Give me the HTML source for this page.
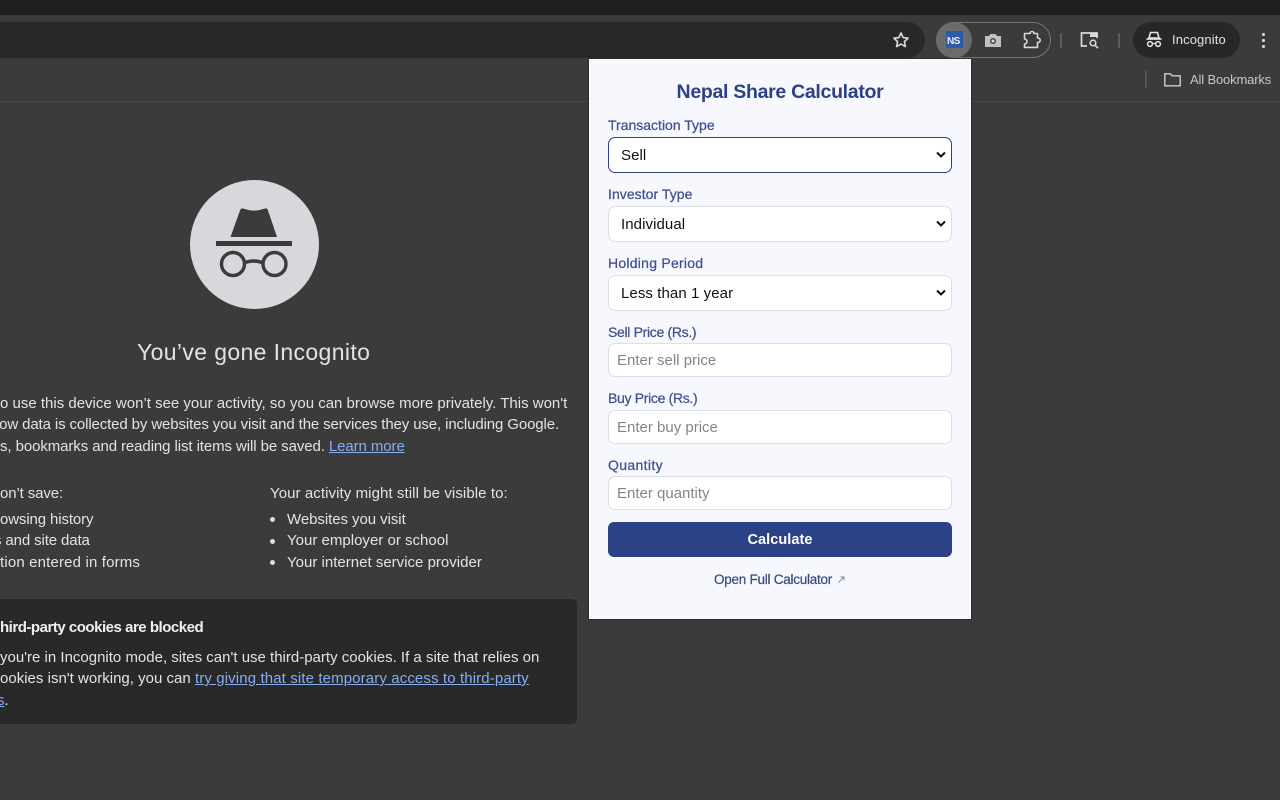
<!DOCTYPE html>
<html><head><meta charset="utf-8"><style>
html,body{margin:0;padding:0;width:1280px;height:800px;overflow:hidden;background:#3b3b3b;font-family:"Liberation Sans",sans-serif}
.a{position:absolute;white-space:nowrap}
.t{font-size:15px;line-height:20px;color:#e3e3e3;letter-spacing:-.12px}
a{color:#86aef0;text-decoration:underline}
.l{left:608px;font-size:14px;line-height:16px;color:#42508f;font-weight:400;-webkit-text-stroke:.25px #42508f}
.f{left:608px;width:344px;box-sizing:border-box;background:#fff;border:1px solid #dcdfea;border-radius:7px;font-family:"Liberation Sans",sans-serif;font-size:15px;color:#111;margin:0}
.s{height:36px;padding-left:12px;line-height:36px;letter-spacing:.08px}
.i{height:34px;padding-left:8px;line-height:34px;color:#858585}
.c{position:absolute;right:5px;top:13px}
</style></head><body>
<div class="a" style="left:0;top:0;width:1280px;height:15px;background:#1f1f1f"></div>
<div class="a" style="left:-30px;top:22px;width:955px;height:36px;background:#282828;border-radius:18px"></div>
<div class="a" style="left:0;top:101px;width:1280px;height:1px;background:#474747"></div>

<svg class="a" style="left:891px;top:30px" width="20" height="20" viewBox="0 0 20 20"><path d="M10 3l2.100 4.600 5 .6-3.700 3.400 1 5-4.400-2.500-4.400 2.500 1-5L2.900 8.200l5-.6z" fill="none" stroke="#dcdcdc" stroke-width="1.600" stroke-linejoin="round"/></svg>

<div class="a" style="left:936px;top:22px;width:113px;height:34px;border:1px solid #747474;border-radius:18px"></div>
<div class="a" style="left:936px;top:22px;width:36px;height:36px;background:#6b6b6b;border-radius:50%"></div>
<div class="a" style="left:946px;top:31px;width:17px;height:17px;background:#2a5caa"></div>
<div class="a" style="left:947px;top:36px;font-size:10px;line-height:11px;font-weight:700;color:#e8eef8;letter-spacing:-.6px">NS</div>
<svg class="a" style="left:984px;top:31px" width="18" height="18" viewBox="0 0 18 18"><path d="M1 5h4l1.500-2h5L13 5h4v11H1z" fill="#c0c0c0"/><circle cx="9" cy="10" r="3" fill="#444"/><circle cx="9" cy="10" r="1.500" fill="#ddd"/></svg>
<svg class="a" style="left:1022px;top:30px" width="20" height="20" viewBox="0 0 20 20"><path d="M2.500 3.500h5.500a2 2 0 0 1 4 0h3.500v4.500h.5a2.200 2.200 0 0 1 0 4.400h-.5v5H2.500v-3.400a2.500 2.500 0 0 0 0-5z" fill="none" stroke="#d8d8d8" stroke-width="1.600" stroke-linejoin="round"/></svg>
<div class="a" style="left:1060px;top:33px;width:2px;height:15px;background:#5c5c5c"></div>
<svg class="a" style="left:1079px;top:30px" width="22" height="20" viewBox="0 0 22 20"><path d="M8 16H2.500V3H18v5" fill="none" stroke="#d8d8d8" stroke-width="1.700"/><rect x="11" y="3" width="8" height="4" fill="#d8d8d8"/><circle cx="14" cy="13" r="2.800" fill="none" stroke="#d8d8d8" stroke-width="1.600"/><path d="M16 15.200l3 3" stroke="#d8d8d8" stroke-width="1.700"/></svg>
<div class="a" style="left:1118px;top:33px;width:2px;height:15px;background:#5c5c5c"></div>
<div class="a" style="left:1133px;top:22px;width:107px;height:36px;background:#272727;border-radius:18px"></div>
<svg class="a" style="left:1145px;top:30px" width="18" height="18" viewBox="0 0 18 18"><path d="M5.500 2.500h7L14 8H4z" fill="none" stroke="#e3e3e3" stroke-width="1.600"/><path d="M1.500 9h15" stroke="#e3e3e3" stroke-width="1.700"/><circle cx="5" cy="14" r="2.400" fill="none" stroke="#e3e3e3" stroke-width="1.500"/><circle cx="13" cy="14" r="2.400" fill="none" stroke="#e3e3e3" stroke-width="1.500"/><path d="M7.400 13.500h3.200" stroke="#e3e3e3" stroke-width="1.200"/></svg>
<div class="a" style="left:1172px;top:32px;font-size:13px;line-height:16px;color:#e3e3e3;letter-spacing:.12px">Incognito</div>
<div class="a" style="left:1262px;top:33px;width:3px;height:3px;border-radius:50%;background:#ddd;box-shadow:0 6px 0 #ddd,0 12px 0 #ddd"></div>

<div class="a" style="left:1145px;top:71px;width:2px;height:17px;background:#555"></div>
<svg class="a" style="left:1163px;top:71px" width="19" height="17" viewBox="0 0 19 17"><path d="M1.800 14.800V2.800h5.400l2 2h8v10z" fill="none" stroke="#cfcfcf" stroke-width="1.400"/></svg>
<div class="a" style="left:1190px;top:72px;font-size:13px;line-height:16px;color:#c7c7c7;letter-spacing:-.15px">All Bookmarks</div>

<div class="a" style="left:190px;top:180px;width:129px;height:129px;background:#d7d8dc;border-radius:50%"></div>
<svg class="a" style="left:190px;top:180px" width="129" height="129" viewBox="0 0 129 129"><path d="M40.500 57l9.500-26.500q.8-2.500 3-2l5.500 1.500q5.500 1.200 11 0l5.500-1.500q2.200-.5 3 2L87 57z" fill="#3b3b3b"/><rect x="26" y="61" width="76" height="5" fill="#3b3b3b"/><circle cx="43" cy="84" r="11.500" fill="none" stroke="#3b3b3b" stroke-width="3.400"/><circle cx="84.500" cy="84" r="11.500" fill="none" stroke="#3b3b3b" stroke-width="3.400"/><path d="M54 83q9.700-4 19.500 0" fill="none" stroke="#3b3b3b" stroke-width="3.400"/></svg>
<div class="a" style="left:137px;top:338px;font-size:23px;line-height:28px;color:#e3e3e3;letter-spacing:.37px">You’ve gone Incognito</div>

<div class="a t" style="left:0;top:394px;letter-spacing:0">o use this device won’t see your activity, so you can browse more privately. This won't</div>
<div class="a t" style="right:721px;top:415px">ow data is collected by websites you visit and the services they use, including Google.</div>
<div class="a t" style="left:0;top:437px;letter-spacing:-.09px">s, bookmarks and reading list items will be saved. <a>Learn more</a></div>

<div class="a t" style="left:0;top:484px">on’t save:</div>
<div class="a t" style="left:0;top:510px">owsing history</div>
<div class="a t" style="left:-6px;top:531px">s and site data</div>
<div class="a t" style="left:0;top:553px;letter-spacing:.16px">tion entered in forms</div>

<div class="a t" style="left:270px;top:484px;letter-spacing:.08px">Your activity might still be visible to:</div>
<div class="a t" style="left:287px;top:510px;letter-spacing:-.06px">Websites you visit</div>
<div class="a t" style="left:287px;top:531px;letter-spacing:.01px">Your employer or school</div>
<div class="a t" style="left:287px;top:553px;letter-spacing:.01px">Your internet service provider</div>
<div class="a" style="left:270px;top:517px;width:5px;height:5px;border-radius:50%;background:#ddd"></div>
<div class="a" style="left:270px;top:539px;width:5px;height:5px;border-radius:50%;background:#ddd"></div>
<div class="a" style="left:270px;top:560px;width:5px;height:5px;border-radius:50%;background:#ddd"></div>

<div class="a" style="left:-20px;top:599px;width:597px;height:125px;background:#292929;border-radius:5px"></div>
<div class="a t" style="left:0;top:618px;font-weight:700;color:#f0f0f0;letter-spacing:-.48px">hird-party cookies are blocked</div>
<div class="a t" style="left:0;top:648px;letter-spacing:0">you're in Incognito mode, sites can't use third-party cookies. If a site that relies on</div>
<div class="a t" style="left:0;top:669px;letter-spacing:.01px">ookies isn't working, you can <a style="letter-spacing:.12px">try giving that site temporary access to third-party</a></div>
<div class="a t" style="left:-3px;top:691px"><a>s</a>.</div>

<div class="a" style="left:589px;top:59px;width:382px;height:560px;background:#f6f8fd;box-shadow:0 0 2px rgba(0,0,0,.7)"></div>
<div class="a" style="left:589px;top:79px;width:382px;text-align:center;font-size:19.500px;line-height:26px;font-weight:700;color:#2d4285;letter-spacing:-.3px">Nepal Share Calculator</div>

<div class="a l" style="top:117px;letter-spacing:0">Transaction Type</div>
<div class="a f s" style="top:137px;border:1.500px solid #2c4287;color:#111">Sell<svg class="c" width="10" height="8" viewBox="0 0 10 8"><path d="M1 1.500l4 4 4-4" fill="none" stroke="#111" stroke-width="2"/></svg></div>
<div class="a l" style="top:186px;letter-spacing:.05px">Investor Type</div>
<div class="a f s" style="top:206px">Individual<svg class="c" width="10" height="8" viewBox="0 0 10 8"><path d="M1 1.500l4 4 4-4" fill="none" stroke="#111" stroke-width="2"/></svg></div>
<div class="a l" style="top:255px;letter-spacing:.25px">Holding Period</div>
<div class="a f s" style="top:275px">Less than 1 year<svg class="c" width="10" height="8" viewBox="0 0 10 8"><path d="M1 1.500l4 4 4-4" fill="none" stroke="#111" stroke-width="2"/></svg></div>
<div class="a l" style="top:324px;letter-spacing:-.32px">Sell Price (Rs.)</div>
<div class="a f i" style="top:343px">Enter sell price</div>
<div class="a l" style="top:390px;letter-spacing:-.32px">Buy Price (Rs.)</div>
<div class="a f i" style="top:410px">Enter buy price</div>
<div class="a l" style="top:457px;letter-spacing:.35px">Quantity</div>
<div class="a f i" style="top:476px">Enter quantity</div>
<div class="a" style="left:608px;top:522px;width:344px;height:35px;background:#2c4287;border-radius:6px;color:#fff;text-align:center;font-size:14.500px;font-weight:700;line-height:36px;letter-spacing:.05px">Calculate</div>
<div class="a" style="left:714px;top:571px;font-size:13.500px;line-height:17px;color:#37497f;letter-spacing:-.25px;-webkit-text-stroke:.2px #37497f">Open Full Calculator</div>
<svg class="a" style="left:837px;top:575px" width="9" height="9" viewBox="0 0 9 9"><path d="M1.500 7.500l5-5M3.500 2h3.500v3.500" fill="none" stroke="#8089a8" stroke-width="1"/></svg>
</body></html>
